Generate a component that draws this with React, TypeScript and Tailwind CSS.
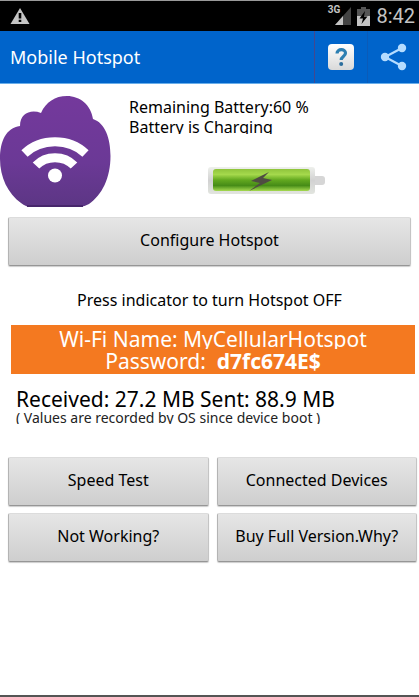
import type { ReactNode } from "react"

const ACTIONS = ["Speed Test", "Connected Devices", "Not Working?", "Buy Full Version.Why?"]

function StatusBar() {
  return (
    <div className="flex h-[31px] items-center justify-between border-t border-[#9a9a9a] bg-black pl-2.5 pr-1">
      <svg viewBox="0 0 20 18" className="h-[18px] w-5" aria-hidden="true">
        <path d="M10 1 19.5 17H.5Z" fill="#c4c4c4" />
        <path d="M8.7 6h2.6v5.500H8.700ZM8.700 12.800h2.600v2.200H8.700Z" fill="#000" />
      </svg>
      <div className="flex items-center">
        <span className="self-start font-[Roboto] text-[10px] leading-3 font-bold text-[#c4c4c4]">3G</span>
        <svg viewBox="0 0 17 18" className="-ml-1.5 h-[18px] w-[17px]" aria-hidden="true">
          <path d="M17 0v18H1Z" fill="#444" />
          <path d="M9 9v9H1Z" fill="#c4c4c4" />
        </svg>
        <svg viewBox="0 0 13 19" className="ml-1.5 h-[19px] w-[13px]" aria-hidden="true">
          <path d="M4 0h5v2h4v8H0V2h4Z" fill="#555" />
          <path d="M0 9h13v10H0Z" fill="#c4c4c4" />
          <path d="M8 4 2.500 11.500H6L4.500 17 10.500 9.500H7Z" fill="#000" />
        </svg>
        <span className="ml-1.5 font-[Roboto] text-xl leading-6 text-[#c4c4c4]">8:42</span>
      </div>
    </div>
  )
}

function Header() {
  return (
    <header className="flex h-[53px] items-stretch border-b border-[#69aeea] bg-[#0064cb] text-white">
      <h1 className="flex-1 self-center pl-2.5 text-lg">Mobile Hotspot</h1>
      <button aria-label="Help" className="flex w-[53px] items-center justify-center border-l border-[#43488f]">
        <svg viewBox="0 0 26 26" className="h-[26px] w-[26px]">
          <defs>
            <linearGradient id="tile" x2="0" y2="1">
              <stop stopColor="#fff" />
              <stop offset="1" stopColor="#d9d9d9" />
            </linearGradient>
          </defs>
          <rect width="26" height="26" rx="4" fill="url(#tile)" />
          <path d="M9 9.500C9 4.500 17.500 4.500 17.500 9c0 3.500-4.300 3.500-4.300 7" fill="none" stroke="#2d7fb2" strokeWidth="3.200" />
          <circle cx="13.200" cy="20" r="2" fill="#2d6f9e" />
        </svg>
      </button>
      <button aria-label="Share" className="flex w-[52px] items-center justify-center border-l border-[#0b5bb8]">
        <svg viewBox="0 0 28 28" className="h-7 w-7">
          <path d="M22 5 5 14l17 9" fill="none" stroke="#b5dcff" strokeWidth="2.200" />
          <g fill="#b5dcff">
            <circle cx="22" cy="5" r="4.200" />
            <circle cx="5" cy="14" r="4.200" />
            <circle cx="22" cy="23" r="4.200" />
          </g>
        </svg>
      </button>
    </header>
  )
}

function HotspotIcon() {
  return (
    <svg viewBox="0 0 111 113" className="h-[113px] w-[111px]">
      <defs>
        <linearGradient id="purple" x2="0" y2="1">
          <stop stopColor="#74399c" />
          <stop offset="0.600" stopColor="#6b3996" />
          <stop offset="1" stopColor="#5c3684" />
        </linearGradient>
      </defs>
      <path
        d="M20 30C20 17 31 13 41 17C46 6 55 0 67 0C80 0 91 9 93 23C105 27 110.500 42 110.500 60C110.500 82 102 99 89 108Q84 111 79 111H31Q26 111 21 107C8 98 0 81 0 63C0 45 6 32 20 30Z"
        fill="url(#purple)"
      />
      <path d="M27 110H83" stroke="#47266b" strokeWidth="2" />
      <g fill="none" stroke="#fff" strokeWidth="9">
        <path d="M24.500 57.500C41 41.800 69 41.800 85.500 57.500" />
        <path d="M36 69.500C46 59 64 59 74 69.500" />
      </g>
      <circle cx="55" cy="79.500" r="7" fill="#fff" />
    </svg>
  )
}

function BatteryIcon() {
  return (
    <svg viewBox="0 0 118 27" className="h-[27px] w-[118px]" role="img" aria-label="Battery charging">
      <defs>
        <linearGradient id="shell" x2="0" y2="1">
          <stop stopColor="#eef0ec" />
          <stop offset="0.500" stopColor="#d2d2d2" />
          <stop offset="1" stopColor="#e2e5df" />
        </linearGradient>
        <linearGradient id="charge" x2="0" y2="1">
          <stop stopColor="#8fc43c" />
          <stop offset="0.250" stopColor="#a5d94c" />
          <stop offset="0.500" stopColor="#62a81f" />
          <stop offset="0.750" stopColor="#468c17" />
          <stop offset="1" stopColor="#a6db50" />
        </linearGradient>
      </defs>
      <rect x="104" y="9" width="13" height="9" rx="3" fill="#d6d6d6" />
      <rect width="107" height="27" rx="3" fill="url(#shell)" />
      <rect x="5" y="2" width="97" height="22" rx="3" fill="url(#charge)" />
      <path d="M61 5 43 14l9 2L41 24l23-11-9-2Z" fill="#4f4d42" />
    </svg>
  )
}

function PanelButton({ children }: { children: ReactNode }) {
  return (
    <button className="h-[49px] w-full rounded-xs border border-t-[#dcdcdc] border-r-[#c4c4c4] border-b-[#969696] border-l-[#b4b4b4] bg-linear-to-b from-[#e6e6e6] to-[#cecece] pb-1 text-base whitespace-nowrap shadow-[0_1px_1px_#ccc]">
      {children}
    </button>
  )
}

export default function App() {
  return (
    <div className="flex min-h-screen flex-col border-b-2 border-[#555] bg-white font-['Noto_Sans',sans-serif] text-black">
      <StatusBar />
      <Header />
      <main>
        <section className="flex pt-3">
          <button aria-label="Turn hotspot off" className="shrink-0">
            <HotspotIcon />
          </button>
          <div className="flex-1 pt-px pl-[18px] text-base leading-5">
            <p>Remaining Battery:60 %</p>
            <p className="h-[17px] overflow-hidden">Battery is Charging</p>
            <div className="flex pt-[33px] pl-[79px]">
              <BatteryIcon />
            </div>
          </div>
        </section>
        <div className="px-2 pt-2">
          <PanelButton>Configure Hotspot</PanelButton>
        </div>
        <p className="pt-5 text-center text-base leading-7">Press indicator to turn Hotspot OFF</p>
        <section className="mt-[11px] mr-1 ml-[11px] h-[49px] bg-[#f47920] pt-0.5 text-center text-[21px] text-white">
          <p className="h-[22px] overflow-hidden leading-6">Wi-Fi Name: MyCellularHotspot</p>
          <p className="leading-6">
            Password: &nbsp;<b>d7fc674E$</b>
          </p>
        </section>
        <section className="pt-3.5 pl-4">
          <p className="text-[21px] leading-[22px]">Received: 27.2 MB Sent: 88.9 MB</p>
          <p className="h-3.5 overflow-hidden text-sm leading-4 text-[#222]">( Values are recorded by OS since device boot )</p>
        </section>
        <section className="grid grid-cols-2 gap-x-2 gap-y-[7px] pt-[33px] pr-0.5 pl-2">
          {ACTIONS.map((label) => (
            <PanelButton key={label}>{label}</PanelButton>
          ))}
        </section>
      </main>
    </div>
  )
}
